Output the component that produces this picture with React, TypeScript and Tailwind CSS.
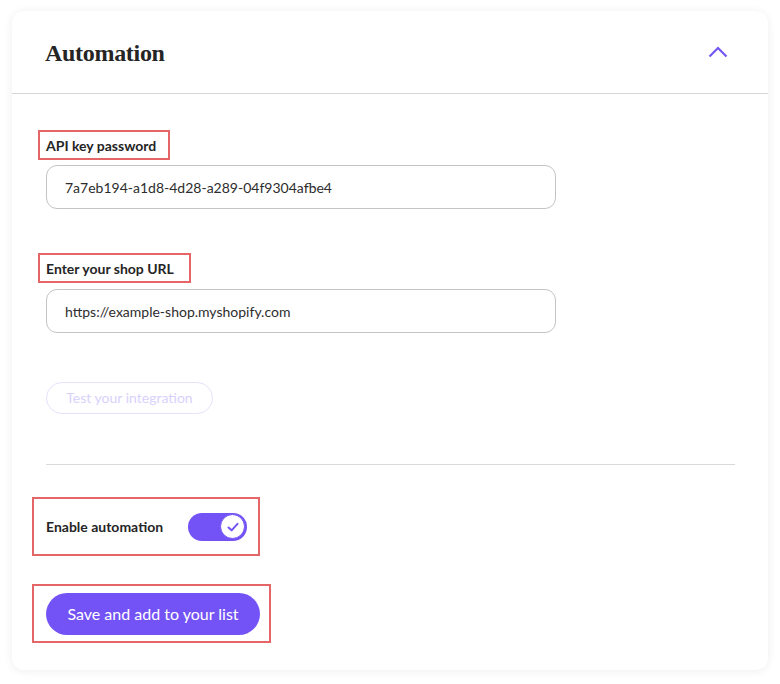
import React, { useState } from "react";

const FONT = { fontFamily: "Lato, 'Noto Sans', sans-serif" };

function Highlight({ children, className = "" }: { children: React.ReactNode; className?: string }) {
  return <div className={`border-2 border-[#e56666] ${className}`}>{children}</div>;
}

function TextField({ value }: { value: string }) {
  return (
    <div className="ml-[34px] flex h-[44px] w-[510px] items-center rounded-[11px] border border-[#c4c4c4] bg-white px-[18px] text-[14px] text-[#2d2d2d]">
      {value}
    </div>
  );
}

export default function App() {
  const [enabled, setEnabled] = useState(true);

  return (
    <div className="min-h-[684px] w-[780px] bg-white pl-[12px] pt-[11px]" style={FONT}>
      <div className="w-[756px] rounded-[12px] bg-white shadow-[0_1px_10px_rgba(0,0,0,0.07)]">
        <div className="flex h-[83px] items-center justify-between border-b border-[#d6d6d6] pl-[33px] pr-[40px]">
          <h2
            className="pt-[2px] text-[24px] font-bold text-[#252525] tracking-[-0.3px]"
            style={{ fontFamily: "'Liberation Serif', 'DejaVu Serif', serif" }}
          >
            Automation
          </h2>
          <svg width="20" height="12" viewBox="0 0 20 12" fill="none">
            <path d="M1.5 10.5 L10 2 L18.5 10.5" stroke="#7457f5" strokeWidth="2.2" />
          </svg>
        </div>

        <div className="pb-[27px] pt-[36px]">
          <Highlight className="ml-[26px] flex h-[30px] w-[132px] items-center pl-[6px]">
            <span className="text-[14px] font-bold text-[#252525]">API key password</span>
          </Highlight>
          <div className="mt-[5px]">
            <TextField value="7a7eb194-a1d8-4d28-a289-04f9304afbe4" />
          </div>

          <Highlight className="ml-[26px] mt-[44px] flex h-[30px] w-[153px] items-center pl-[6px]">
            <span className="text-[14px] font-bold text-[#252525]">Enter your shop URL</span>
          </Highlight>
          <div className="mt-[6px]">
            <TextField value="https://example-shop.myshopify.com" />
          </div>

          <button className="ml-[34px] mt-[49px] flex h-[32px] w-[167px] items-center justify-center rounded-full border border-[#e8e2fd] pb-[2px] text-[14px] text-[#d9d1fc]">
            Test your integration
          </button>

          <div className="ml-[34px] mr-[33px] mt-[50px] border-t border-[#d9d9d9]" />

          <Highlight className="ml-[20px] mt-[32px] flex h-[59px] w-[228px] items-center pl-[12px]">
            <span className="text-[14px] font-bold text-[#252525]">Enable automation</span>
            <button
              onClick={() => setEnabled(!enabled)}
              className="ml-[25px] flex h-[28px] w-[59px] items-center justify-end rounded-full bg-[#7353f5] pr-[2px]"
            >
              <span className="flex h-[25px] w-[25px] items-center justify-center rounded-full border border-[#7353f5] bg-white">
                <svg width="14" height="14" viewBox="0 0 14 14" fill="none">
                  <path d="M2.5 7.5 L5.6 10.3 L11.5 3.8" stroke="#7353f5" strokeWidth="2" strokeLinecap="round" strokeLinejoin="round" />
                </svg>
              </span>
            </button>
          </Highlight>

          <Highlight className="ml-[20px] mt-[28px] flex h-[59px] w-[239px] items-center pl-[12px]">
            <button className="flex h-[42px] w-[214px] items-center justify-center rounded-full bg-[#7353f5] text-[16px] text-white">
              Save and add to your list
            </button>
          </Highlight>
        </div>
      </div>
    </div>
  );
}
